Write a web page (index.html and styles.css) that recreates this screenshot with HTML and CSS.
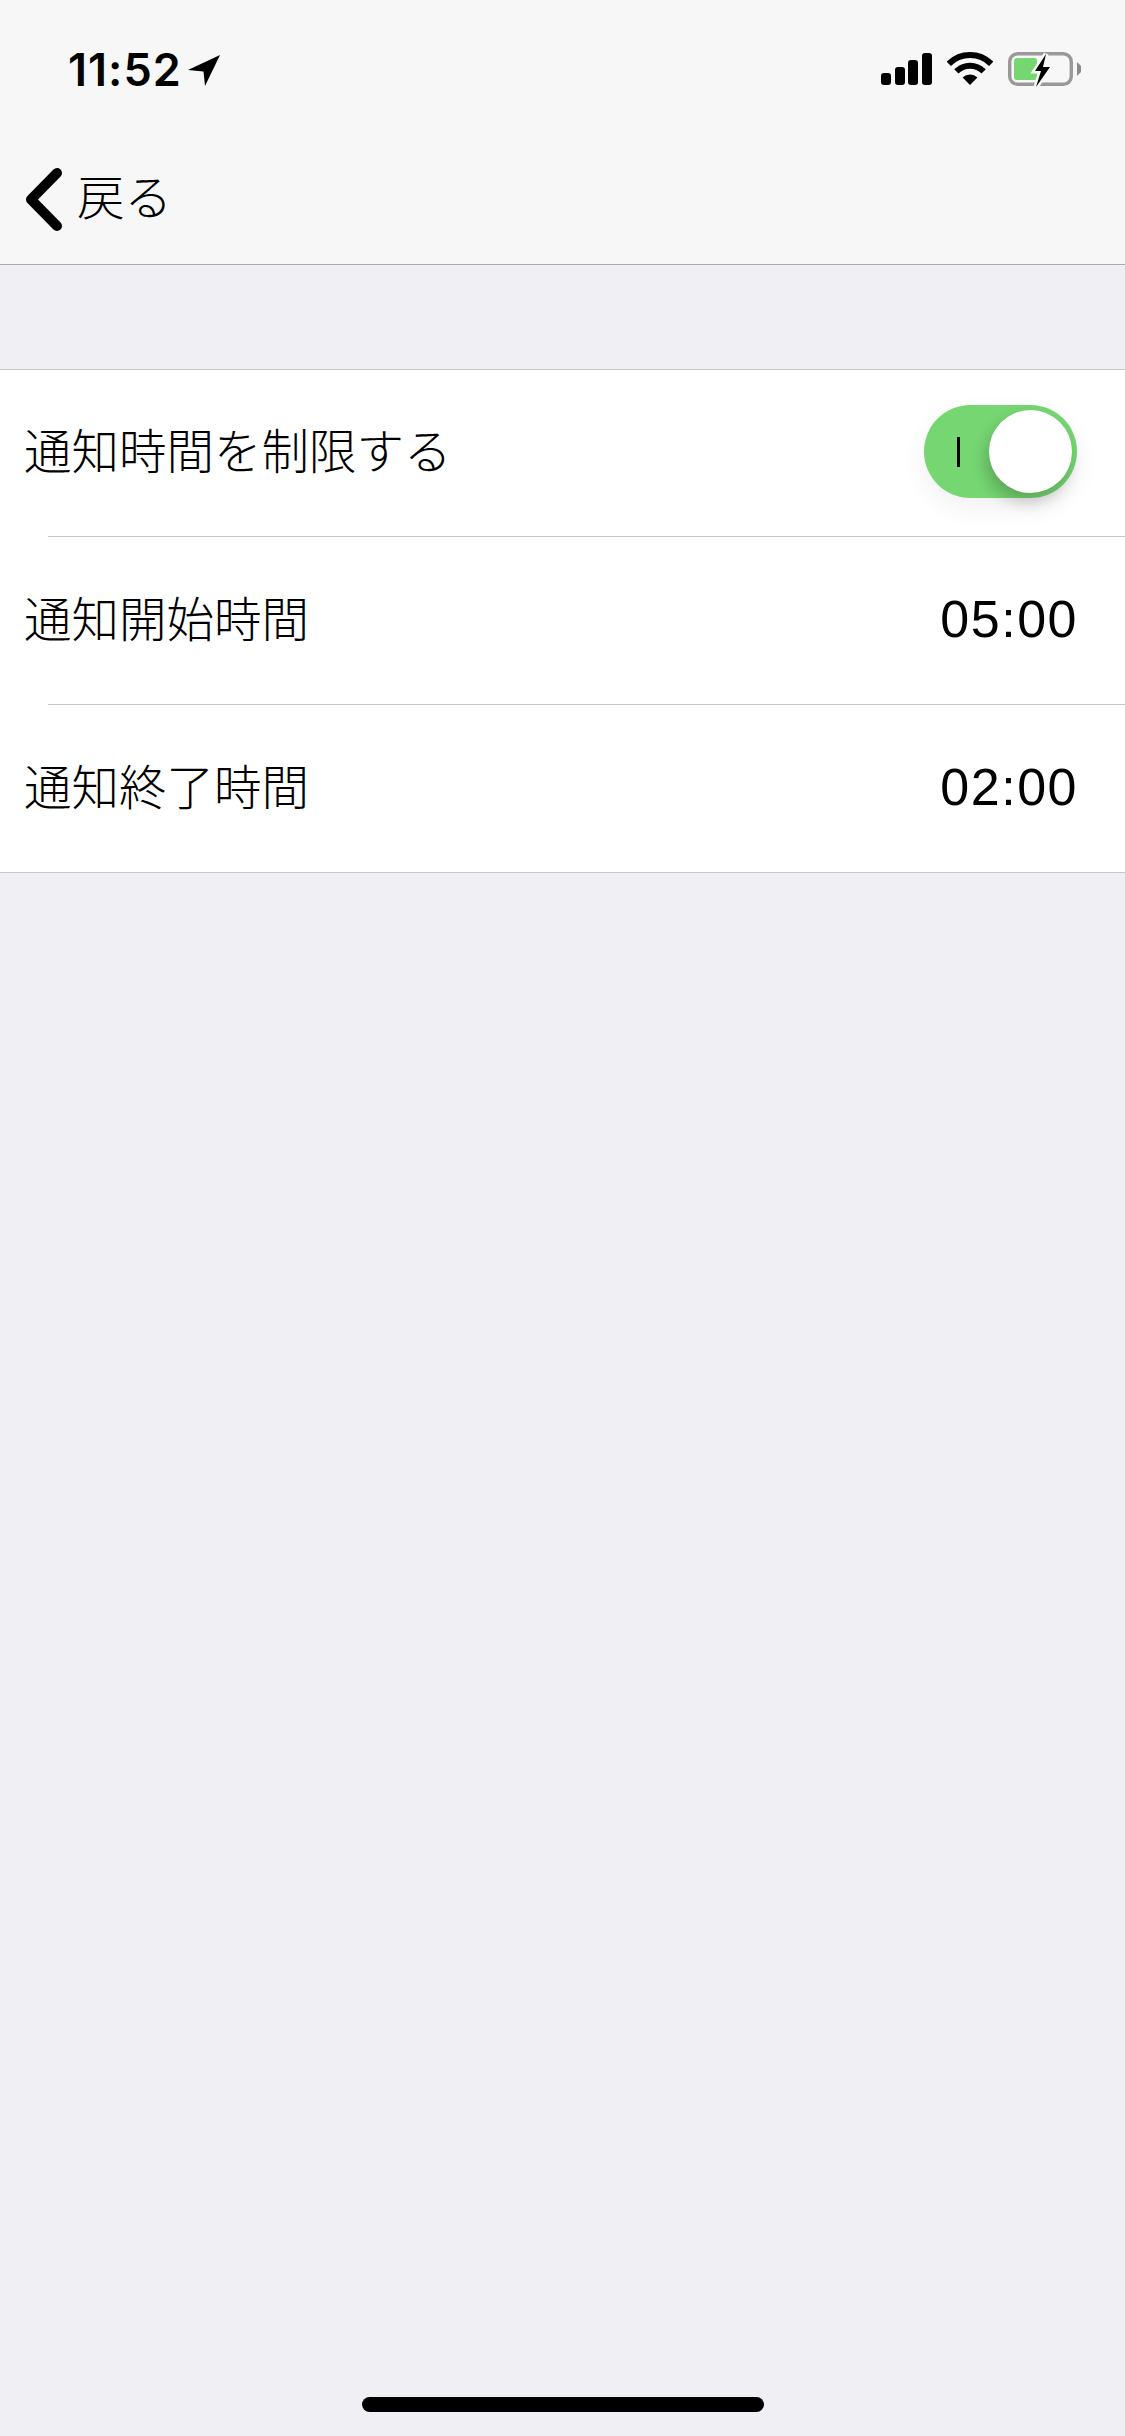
FILE: index.html
```html
<!DOCTYPE html>
<html lang="ja">
<head>
  <meta charset="UTF-8" />
  <title>通知時間</title>
  <link rel="stylesheet" href="styles.css">
</head>
<body>

  <!-- Barra de status -->
  <div class="statusbar">
    <div class="clock">
      <span>11:52</span>
      <svg class="arrow" width="34" height="34" viewBox="0 0 34 34">
        <path d="M33 1 L1 16 L16.500 17.500 L18 32 Z" fill="#000"/>
      </svg>
    </div>
    <div class="status-icons">
      <div class="signal">
        <span class="bar bar1"></span>
        <span class="bar bar2"></span>
        <span class="bar bar3"></span>
        <span class="bar bar4"></span>
      </div>
      <svg width="46" height="34" viewBox="0 0 46 34">
        <path d="M1.800 11.800 A30 30 0 0 1 44.200 11.800" fill="none" stroke="#000" stroke-width="6"/>
        <path d="M9.350 19.350 A19.300 19.300 0 0 1 36.650 19.350" fill="none" stroke="#000" stroke-width="6"/>
        <path d="M15.600 25.600 A10.500 10.500 0 0 1 30.400 25.600 L23 33 Z" fill="#000"/>
      </svg>
      <svg class="battery" width="74" height="36" viewBox="0 0 74 36">
        <rect x="1.700" y="1.700" width="61.600" height="30.600" rx="8" fill="none" stroke="#999" stroke-width="3.400"/>
        <path d="M69 10 L73 14 L73 20 L69 24 Z" fill="#8a8a8a"/>
        <rect x="6" y="6" width="23" height="22" rx="3" fill="#76d672"/>
        <path d="M38 2 L27 19 L33 19 L28 35 L42 15 L35 15 Z" fill="#f7f7f7" stroke="#f7f7f7" stroke-width="5"/>
        <path d="M38 2 L27 19 L33 19 L28 35 L42 15 L35 15 Z" fill="#000"/>
      </svg>
    </div>
  </div>

  <!-- Navegação -->
  <div class="navbar">
    <svg class="chevron" width="40" height="66" viewBox="0 0 40 66">
      <path d="M33 6 L7 32.500 L33 59" fill="none" stroke="#000" stroke-width="10" stroke-linecap="round" stroke-linejoin="round"/>
    </svg>
    <span class="back-label">戻る</span>
  </div>

  <!-- Lista -->
  <div class="list">
    <div class="row row-first">
      <span class="row-title">通知時間を制限する</span>
      <div class="toggle">
        <span class="toggle-mark"></span>
        <span class="toggle-knob"></span>
      </div>
    </div>
    <div class="row-line"></div>
    <div class="row">
      <span class="row-title">通知開始時間</span>
      <span class="row-value">05:00</span>
    </div>
    <div class="row-line"></div>
    <div class="row">
      <span class="row-title">通知終了時間</span>
      <span class="row-value">02:00</span>
    </div>
  </div>

  <div class="home-indicator"></div>

</body>
</html>
```

FILE: styles.css
```css
/* Geral */
body {
  font-family: "Liberation Sans", "Noto Sans CJK JP", sans-serif;
  background-color: #efeff4;
  margin: 0;
  padding: 0;
  height: 2436px;
  overflow: hidden;
  color: #000;
}

/* Barra de status */
.statusbar {
  height: 132px;
  background: #f7f7f7;
  display: flex;
  justify-content: space-between;
  align-items: flex-start;
  padding: 52px 43px 0 68px;
  box-sizing: border-box;
}

.clock {
  display: flex;
  align-items: center;
  gap: 5px;
  height: 34px;
  font-family: Inter, sans-serif;
  font-weight: 600;
  font-size: 45px;
  letter-spacing: 1px;
}

.arrow {
  margin-top: 3px;
}

.status-icons {
  display: flex;
  align-items: flex-start;
  gap: 15px;
}

.signal {
  display: flex;
  align-items: flex-end;
  gap: 3.700px;
  height: 33px;
}

.bar {
  width: 10px;
  background: #000;
  border-radius: 3px;
}

.bar1 { height: 12px; }
.bar2 { height: 18px; }
.bar3 { height: 25px; }
.bar4 { height: 32px; }

/* Navegação */
.navbar {
  height: 132px;
  background: #f7f7f7;
  border-bottom: 1px solid #a9a9ab;
  display: flex;
  align-items: center;
  padding-left: 24px;
}

.chevron {
  margin-top: 4px;
}

.back-label {
  font-family: "Noto Sans CJK JP", sans-serif;
  font-weight: 300;
  font-size: 47.500px;
  margin-left: 13px;
  margin-top: -8px;
}

/* Lista */
.list {
  margin-top: 104px;
  background: #fff;
  border-top: 1px solid #c8c7cc;
  border-bottom: 1px solid #c8c7cc;
}

.row {
  height: 167px;
  display: flex;
  align-items: center;
  justify-content: space-between;
  padding: 0 48px 0 24px;
}

.row-first {
  height: 166px;
}

.row-line {
  height: 1px;
  margin-left: 48px;
  background: #c8c7cc;
}

.row-title {
  font-family: "Noto Sans CJK JP", sans-serif;
  font-weight: 300;
  font-size: 47.500px;
  margin-top: -9px;
}

.row-value {
  font-size: 52px;
  letter-spacing: 1.500px;
  margin-right: -1px;
  margin-top: -3px;
}

/* Interruptor */
.toggle {
  width: 153px;
  height: 93px;
  margin-top: -3px;
  box-sizing: border-box;
  padding: 0 5px 0 33px;
  background: #76d672;
  border-radius: 47px;
  display: flex;
  align-items: center;
  justify-content: space-between;
  box-shadow: 0 10px 26px rgba(0, 0, 0, 0.06);
}

.toggle-mark {
  width: 3px;
  height: 30px;
  background: #000;
}

.toggle-knob {
  width: 83px;
  height: 83px;
  background: #fff;
  border-radius: 50%;
  box-shadow: -3px 9px 16px rgba(0, 0, 0, 0.22);
}

/* Indicador inferior */
.home-indicator {
  position: absolute;
  left: 362px;
  top: 2397px;
  width: 402px;
  height: 15px;
  background: #000;
  border-radius: 8px;
}
```
